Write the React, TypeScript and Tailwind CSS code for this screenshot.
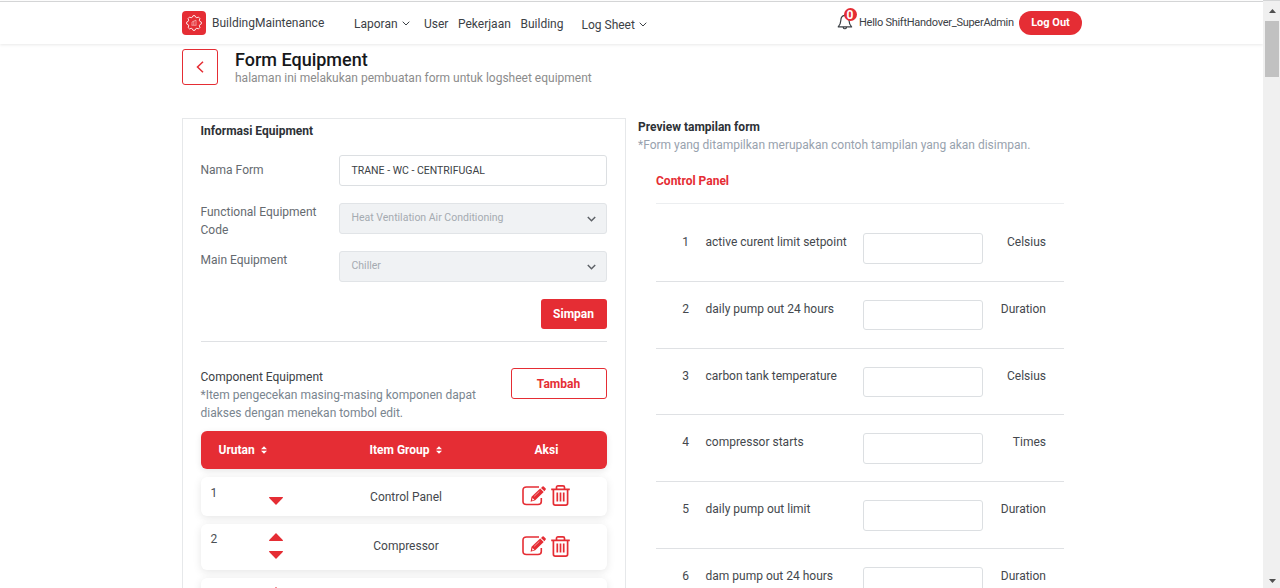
import React from "react";

const RED = "#e52d34";

const items = [
  { name: "active curent limit setpoint", unit: "Celsius" },
  { name: "daily pump out 24 hours", unit: "Duration" },
  { name: "carbon tank temperature", unit: "Celsius" },
  { name: "compressor starts", unit: "Times" },
  { name: "daily pump out limit", unit: "Duration" },
  { name: "dam pump out 24 hours", unit: "Duration" },
];

function Chevron({ className, width = 1 }: { className: string; width?: number }) {
  return (
    <svg className={className} viewBox="0 0 8 5" fill="none" stroke="currentColor" strokeWidth={width}>
      <path d="M.7.7 4 4 7.3.7" />
    </svg>
  );
}

function Logo() {
  return (
    <div className="flex h-6 w-6 items-center justify-center rounded-[4px] bg-[#e52d34]">
      <svg className="h-4 w-4" viewBox="0 0 16 16" fill="none" stroke="#fff" strokeOpacity=".85" strokeWidth="1" strokeLinejoin="round">
        <path d="M6.200 2.300 7 .7h2l.8 1.600 1 .4 1.700-.6 1.400 1.400-.6 1.700.4 1 1.600.8v2l-1.600.8-.4 1 .6 1.700-1.400 1.400-1.700-.6-1 .4-.8 1.600H7l-.8-1.600-1-.4-1.700.6-1.400-1.400.6-1.700-.4-1L.7 9V7l1.600-.8.4-1-.6-1.700 1.400-1.400 1.700.6z" />
        <path d="M5.500 10.300h5M6 10V7l1.800-1v4M8 6l2-.8v4.800" strokeWidth=".8" strokeOpacity=".6" />
      </svg>
    </div>
  );
}

function Bell() {
  return (
    <div className="relative -mt-[2px] h-[18px] w-[17px]">
      <svg className="h-[18px] w-[17px]" viewBox="0 0 17 18" fill="none" stroke="#3c4146" strokeWidth="1.2" strokeLinejoin="round">
        <path d="M7.6 2.400C4.800 2.800 3.900 5 3.800 7.400c-.1 3.200-.8 4.400-2.600 6.500h13.400c-1.800-2.100-2.500-3.300-2.600-6.500C11.900 5 10.500 2.700 7.600 2.400zM6.200 14.300c.4 1.900 2.900 1.900 3.300 0" />
      </svg>
      <span className="absolute -top-[5px] left-[7px] flex h-[13px] w-[13px] items-center justify-center rounded-full bg-[#e52d34] text-[12px] font-bold leading-none text-white">0</span>
    </div>
  );
}

function Sort() {
  return (
    <svg className="h-[8px] w-[6px]" viewBox="0 0 6 8" fill="#fff">
      <path d="M3 .2 6 3.300H0zM3 7.800 0 4.700h6z" />
    </svg>
  );
}

function Arrow({ up = false }: { up?: boolean }) {
  return (
    <svg className="block h-2 w-[14px]" viewBox="0 0 14 8" fill={RED}>
      <path d={up ? "M7 0 14 7.200Q14 8 13.500 8H.5Q0 8 0 7.200z" : "M7 8 0 .8Q0 0 .5 0h13q.5 0 .5.8z"} />
    </svg>
  );
}

function Edit() {
  return (
    <svg className="h-5 w-6" viewBox="0 0 24 20" fill="none" stroke={RED} strokeWidth="1.600">
      <path d="M17 1H4.500Q1 1 1 4v11.500q0 3 3.500 3H16q3.300 0 3.300-3V12" />
      <path d="m8.600 15.700.9-5L18.200 2.600l3.500 3.500-8.500 8.200zM19 1.900l1.500-1.400q.6-.5 1.200 0l2 1.900q.5.600 0 1.200L22.400 5.200z" fill={RED} stroke="none" />
      <path d="m10.500 12 1.800 1.800-2.200.6z" fill="#fff" stroke="none" />
      <path d="m12.200 10.300 5.200-4.900" stroke="#fff" strokeWidth=".5" />
    </svg>
  );
}

function Trash() {
  return (
    <svg className="h-[21px] w-[19px]" viewBox="0 0 19 21" fill="none" stroke={RED} strokeWidth="1.700">
      <path d="M.2 4.300h18.600M5.500 4V2.300Q5.500.900 7 .900h5q1.500 0 1.500 1.400V4M2.400 4.500v13.700q0 1.900 1.800 1.900h10.600q1.800 0 1.800-1.900V4.500M6.300 7.500v9M9.500 7.500v9M12.700 7.500v9" />
    </svg>
  );
}

function ComponentRow({ n, name, up = false, className }: { n?: number; name?: string; up?: boolean; className: string }) {
  return (
    <div className={`flex shrink-0 rounded-[6px] bg-white shadow-[0_2px_8px_rgba(0,0,0,0.1)] ${className}`}>
      <div className={`w-[68px] shrink-0 pl-[10px] text-[#4b4f54] ${up ? "pt-[6px]" : "pt-[7px]"}`}>{n}</div>
      <div className={`flex w-[74px] shrink-0 flex-col gap-[10px] ${up ? "pt-[9px]" : "pt-[20px]"}`}>
        {up && <Arrow up />}
        <Arrow />
      </div>
      <div className={`flex w-[127px] shrink-0 items-center justify-center ${up ? "-mt-[2px]" : "mt-px"}`}>{name}</div>
      <div className="-mt-[2px] flex items-center gap-[5.500px] pl-[52px]">
        <Edit />
        <Trash />
      </div>
    </div>
  );
}

function SelectBox({ value }: { value: string }) {
  return (
    <div className="flex h-[31px] w-[268.500px] shrink-0 items-center justify-between rounded-[3px] border border-[#e1e4e7] bg-[#f0f2f4] pl-3 pr-[10px] text-[10.500px] text-[#a5abb1]">
      <span className="-mt-px">{value}</span>
      <Chevron className="mt-px h-[6px] w-[9px] text-[#5d6166]" width={1.300} />
    </div>
  );
}

function Header() {
  return (
    <header className="flex h-[43px] shrink-0 items-center border-t border-[#d4d5d6] bg-white pl-[182px] text-[#3c4146] shadow-[0_1px_3px_rgba(0,0,0,0.09)]">
      <Logo />
      <div className="w-[148px] pl-[6px]">BuildingMaintenance</div>
      <div className="flex w-[70px] items-center gap-[4px] pt-px">Laporan <Chevron className="h-[5px] w-2" /></div>
      <div className="w-[34px] pt-px">User</div>
      <div className="w-[62.500px] pt-px">Pekerjaan</div>
      <div className="w-[61px] pt-px">Building</div>
      <div className="flex w-[255px] items-center gap-[4px] pt-[3px]">Log Sheet <Chevron className="h-[5px] w-2" /></div>
      <Bell />
      <div className="w-[165.500px] whitespace-nowrap pl-[5.500px] text-[11px] tracking-[-0.27px]">Hello ShiftHandover_SuperAdmin</div>
      <button className="h-6 w-[63px] rounded-full bg-[#e52d34] text-[11px] font-bold text-white">Log Out</button>
    </header>
  );
}

function Equipment() {
  return (
    <section className="h-[490px] w-[444px] shrink-0 border border-[#e6e8ea] pl-[17.500px] pr-[18.500px] pt-[3px]">
      <h2 className="font-bold text-[#2d3136]">Informasi Equipment</h2>
      <div className="mt-[15px] flex h-[48px] text-[#656a70]">
        <div className="w-[138px] shrink-0 pt-[6px]">Nama Form</div>
        <div className="flex h-[31px] w-[268.500px] shrink-0 items-center rounded-[3px] border border-[#dcdfe2] px-3 text-[10.500px] text-[#3c4146]">TRANE - WC - CENTRIFUGAL</div>
      </div>
      <div className="flex h-[48px] text-[#656a70]">
        <div className="w-[138px] shrink-0 pr-4">Functional Equipment Code</div>
        <SelectBox value="Heat Ventilation Air Conditioning" />
      </div>
      <div className="flex h-[48px] text-[#656a70]">
        <div className="w-[138px] shrink-0">Main Equipment</div>
        <SelectBox value="Chiller" />
      </div>
      <div className="flex h-[43px] justify-end border-b border-[#dfe1e4]">
        <button className="h-[30px] w-[66px] rounded-[3px] bg-[#e52d34] font-bold text-white">Simpan</button>
      </div>
      <div className="mt-[26px] flex h-[63px] justify-between">
        <div className="w-[290px] text-[#7a858f]">
          <div className="text-[#3c4146]">Component Equipment</div>
          *Item pengecekan masing-masing komponen dapat diakses dengan menekan tombol edit.
        </div>
        <button className="h-[31px] w-[96px] rounded-[3px] border border-[#e52d34] font-bold text-[#e52d34]">Tambah</button>
      </div>
      <div className="flex h-[38px] items-center rounded-[6px] bg-[#e52d34] font-bold text-white shadow-[0_2px_6px_rgba(0,0,0,0.1)]">
        <div className="flex w-[141px] shrink-0 items-center gap-[6px] pl-[18px]">Urutan <Sort /></div>
        <div className="flex w-[128px] shrink-0 items-center justify-center gap-[6px]">Item Group <Sort /></div>
        <div className="pl-[65px]">Aksi</div>
      </div>
      <ComponentRow n={1} name="Control Panel" className="mt-[8px] h-[39px]" />
      <ComponentRow n={2} name="Compressor" up className="mt-[8px] h-[46px]" />
      <ComponentRow up className="mt-[8px] h-[46px]" />
    </section>
  );
}

function Preview() {
  return (
    <section className="ml-3 w-[426px] shrink-0">
      <h2 className="font-bold text-[#2d3136]">Preview tampilan form</h2>
      <p className="text-[#98a2ae]">*Form yang ditampilkan merupakan contoh tampilan yang akan disimpan.</p>
      <div className="ml-[18px] mt-[18px]">
        <h3 className="h-[32px] border-b border-[#eceef0] font-bold text-[#e52d34]">Control Panel</h3>
        <div className="pt-[11px]">
          {items.map((item, i) => (
            <div key={item.name} className="flex h-[66.750px] border-b border-[#dfe1e4] pt-[18px] text-[#44484d]">
              <div className="w-[33px] text-right">{i + 1}</div>
              <div className="w-[174px] pl-[16.500px]">{item.name}</div>
              <div className="h-[30.500px] w-[120px] rounded-[3px] border border-[#dcdfe2]" />
              <div className="w-[63px] text-right">{item.unit}</div>
            </div>
          ))}
        </div>
      </div>
    </section>
  );
}

function Scrollbar() {
  return (
    <div className="flex h-[588px] w-[17px] shrink-0 flex-col items-center border-t border-[#d4d5d6] bg-[#f0f0f0] pl-px">
      <svg className="mt-[8px] h-1 w-[7px]" viewBox="0 0 7 4" fill="#505050"><path d="M3.500 0 7 4H0z" /></svg>
      <div className="mt-[8px] h-[56px] w-[14px] bg-[#c1c1c1]" />
      <svg className="mb-[5px] mt-auto h-1 w-[7px]" viewBox="0 0 7 4" fill="#505050"><path d="M3.500 4 7 0H0z" /></svg>
    </div>
  );
}

export default function App() {
  return (
    <div className="flex h-[588px] w-[1280px] overflow-hidden bg-white font-[Roboto,sans-serif] text-[12px] leading-[18px] text-[#44484d]">
      <div className="flex h-[588px] w-[1263px] shrink-0 flex-col overflow-hidden pt-px">
        <Header />
        <div className="flex h-[74px] shrink-0 pl-[182px] pt-[5px]">
          <button className="flex h-[36px] w-[36px] items-center justify-center rounded-[3px] border border-[#e52d34]">
            <svg className="h-3 w-2" viewBox="0 0 8 12" fill="none" stroke={RED} strokeWidth="1.500"><path d="M7 .7 1.500 6 7 11.300" /></svg>
          </button>
          <div className="pl-[17px] pt-px">
            <h1 className="text-[18px] font-medium leading-[20px] text-[#16181b]">Form Equipment</h1>
            <p className="leading-[17px] text-[#8c8c8c]">halaman ini melakukan pembuatan form untuk logsheet equipment</p>
          </div>
        </div>
        <main className="flex shrink-0 pl-[182px]">
          <Equipment />
          <Preview />
        </main>
      </div>
      <Scrollbar />
    </div>
  );
}
